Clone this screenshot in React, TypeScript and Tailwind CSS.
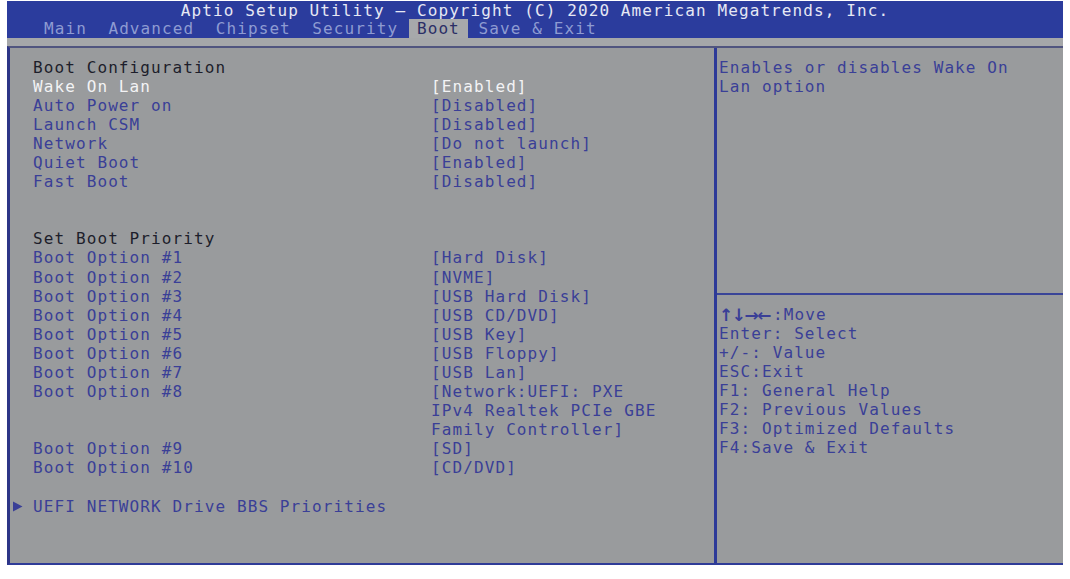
import React from "react";

type Row = {label?: string; value?: string[]; kind?: "head" | "sel" | "item" | "sub" | "blank"};

const rows: Row[] = [
    {label: "Boot Configuration", kind: "head"},
    {label: "Wake On Lan", value: ["[Enabled]"], kind: "sel"},
    {label: "Auto Power on", value: ["[Disabled]"]},
    {label: "Launch CSM", value: ["[Disabled]"]},
    {label: "Network", value: ["[Do not launch]"]},
    {label: "Quiet Boot", value: ["[Enabled]"]},
    {label: "Fast Boot", value: ["[Disabled]"]},
    {kind: "blank"},
    {kind: "blank"},
    {label: "Set Boot Priority", kind: "head"},
    {label: "Boot Option #1", value: ["[Hard Disk]"]},
    {label: "Boot Option #2", value: ["[NVME]"]},
    {label: "Boot Option #3", value: ["[USB Hard Disk]"]},
    {label: "Boot Option #4", value: ["[USB CD/DVD]"]},
    {label: "Boot Option #5", value: ["[USB Key]"]},
    {label: "Boot Option #6", value: ["[USB Floppy]"]},
    {label: "Boot Option #7", value: ["[USB Lan]"]},
    {label: "Boot Option #8", value: ["[Network:UEFI: PXE", "IPv4 Realtek PCIe GBE", "Family Controller]"]},
    {label: "Boot Option #9", value: ["[SD]"]},
    {label: "Boot Option #10", value: ["[CD/DVD]"]},
    {kind: "blank"},
    {label: "UEFI NETWORK Drive BBS Priorities", kind: "sub"},
];

const help = [
    "Enter: Select",
    "+/-: Value",
    "ESC:Exit",
    "F1: General Help",
    "F2: Previous Values",
    "F3: Optimized Defaults",
    "F4:Save & Exit",
];

export default function App() {
    return (
        <div
            className="w-[1070px] h-[579px] bg-white pl-[7px] pt-[1px] text-[16px] leading-[19.1px] tracking-[1.1px]"
            style={{fontFamily: '"DejaVu Sans Mono", "Liberation Mono", monospace'}}
        >
            <div className="w-[1056px] h-[564px] flex flex-col">
                {/* header */}
                <div className="h-[37px] bg-[#2b3c9d] flex flex-col">
                    <div className="h-[19px] text-center text-[#e6e8f4]">
                        Aptio Setup Utility – Copyright (C) 2020 American Megatrends, Inc.
                    </div>
                    <div className="h-[18px] flex items-end pl-[37px] text-[#8e9bd2] whitespace-pre">
                        <span className="leading-[18px] pt-[1px]">Main  Advanced  Chipset  Security </span>
                        <span className="leading-[18px] pt-[1px] bg-[#a7a9ab] text-[#2b2f66] px-[8px]">Boot</span>
                        <span className="leading-[18px] pt-[1px]"> Save & Exit</span>
                    </div>
                </div>
                <div className="h-[8px] bg-[#a5a7a9]" />

                {/* main panel */}
                <div className="flex-1 flex bg-[#999b9d] border-t-2 border-t-[#50557f] border-l-[3px] border-l-[#2d3587] border-b-2 border-b-[#2f3c98]">
                    <div className="w-[704px] pt-[9.5px]">
                        {rows.map((r, i) => {
                            if (r.kind === "blank") return <div key={i} className="h-[19.1px]" />;
                            if (r.kind === "sub")
                                return (
                                    <div key={i} className="flex items-center text-[#3a3f97]">
                                        <span className="w-[23px] pl-[2px] flex items-center">
                                            <svg width="11" height="11" viewBox="0 0 11 11">
                                                <path d="M1 0.5 L10.5 5.5 L1 10.5 Z" fill="#3a3f97" />
                                            </svg>
                                        </span>
                                        <span>{r.label}</span>
                                    </div>
                                );
                            const labelColor =
                                r.kind === "head" ? "text-[#1d1e2b]" : r.kind === "sel" ? "text-[#f3f3f5]" : "text-[#3a3f97]";
                            const valueColor = r.kind === "sel" ? "text-[#f3f3f5]" : "text-[#3a3f97]";
                            return (
                                <div key={i} className="flex pl-[23px]">
                                    <div className={`w-[398px] shrink-0 ${labelColor}`}>{r.label}</div>
                                    <div className={`flex flex-col ${valueColor}`}>
                                        {r.value?.map((v, j) => (
                                            <span key={j}>{v}</span>
                                        ))}
                                    </div>
                                </div>
                            );
                        })}
                    </div>
                    <div className="w-[3px] bg-[#2d3a98]" />
                    <div className="flex-1 flex flex-col text-[#3a3f97]">
                        <div className="h-[247px] pt-[9.5px] pl-[2px] border-b-2 border-b-[#3a4598]">
                            <div>Enables or disables Wake On</div>
                            <div>Lan option</div>
                        </div>
                        <div className="pt-[9.5px] pl-[2px]">
                            <div className="flex items-center h-[19.1px]">
                                <span
                                    className="font-bold text-[17px] tracking-[-1.5px] mr-[3px]"
                                    style={{fontFamily: '"Noto Sans", "DejaVu Sans", sans-serif'}}
                                >
                                    ↑↓→←
                                </span>
                                <span>:Move</span>
                            </div>
                            {help.map((h) => (
                                <div key={h}>{h}</div>
                            ))}
                        </div>
                    </div>
                </div>
            </div>
        </div>
    );
}
